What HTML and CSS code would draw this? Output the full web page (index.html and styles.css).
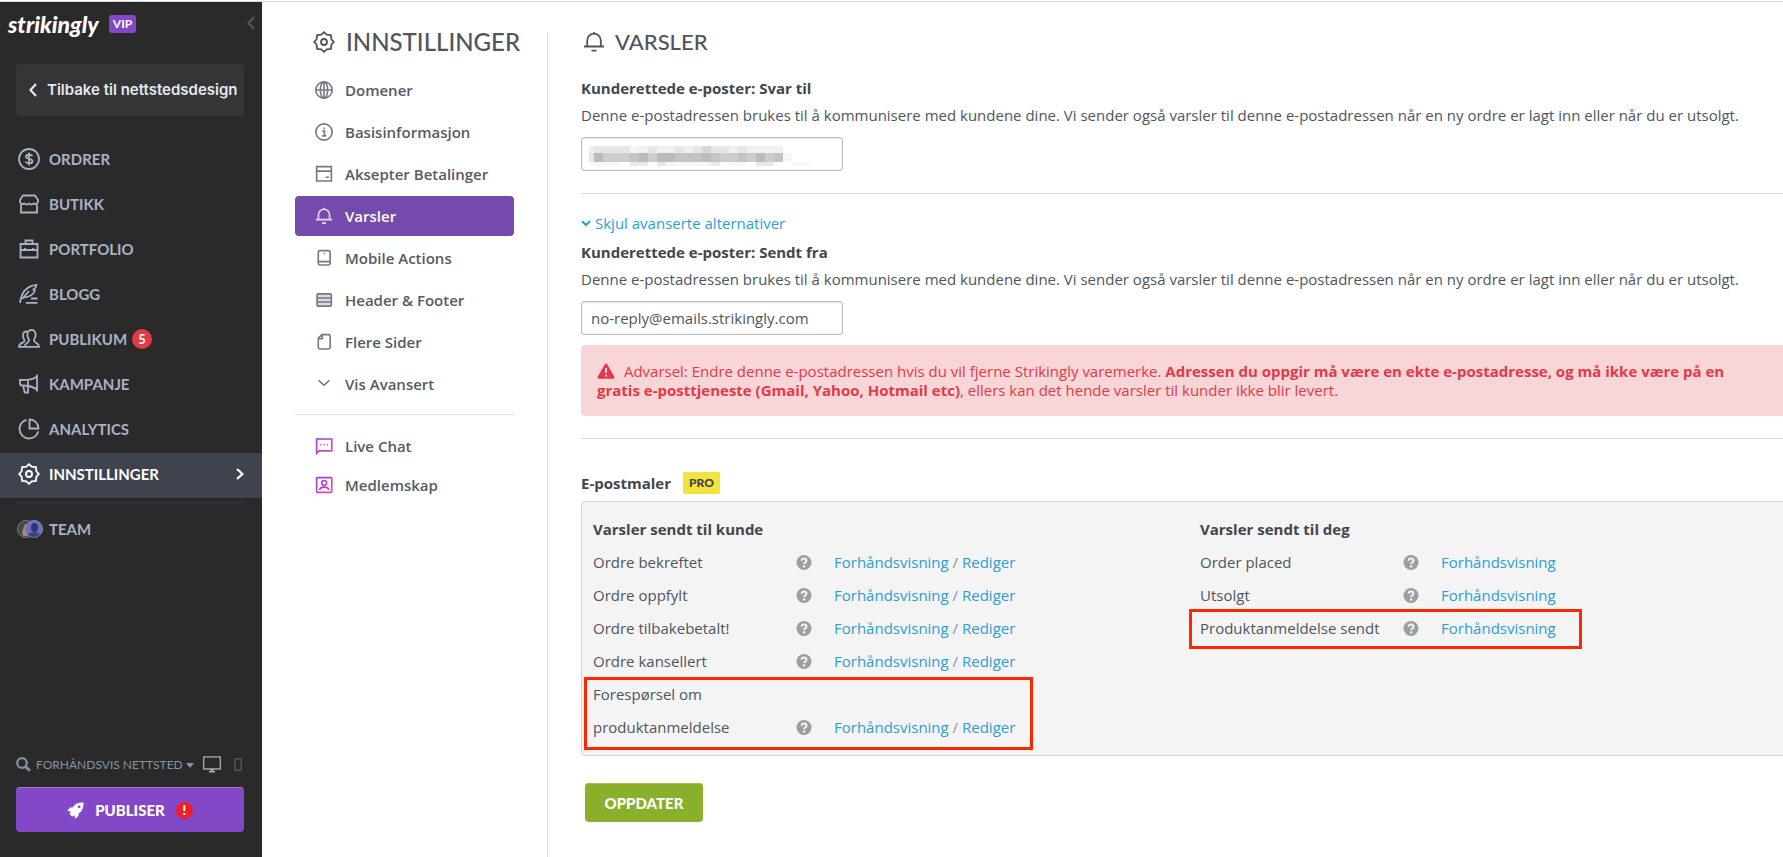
FILE: index.html
```html
<!doctype html>
<html lang="no">
<head>
<meta charset="utf-8">
<title>Varsler - Innstillinger</title>
<link rel="stylesheet" href="styles.css">
</head>
<body>
<svg width="0" height="0" class="defs">
	<defs>
	<linearGradient id="pink" x1="0" y1="0" x2="1" y2="1">
		<stop offset="0" stop-color="#9a3bdc"/>
		<stop offset="1" stop-color="#f04a9b"/>
	</linearGradient>
	<symbol id="gear" viewBox="0 0 22 22">
		<path d="M11 1.2L13.7 3.6L17.9 4.1L18.4 8.3L20.8 11L18.4 13.7L17.9 17.9L13.7 18.4L11 20.8L8.3 18.4L4.1 17.9L3.6 13.7L1.2 11L3.6 8.3L4.1 4.1L8.3 3.6Z"/>
		<circle cx="11" cy="11" r="3"/>
	</symbol>
	<symbol id="bell" viewBox="0 0 22 22">
		<path d="M1 15.5H21M4.2 15.5V9.5A6.8 6.8 0 0 1 17.8 9.5V15.5M11 1V3M8.500 19.700H13.500"/>
	</symbol>
	<symbol id="help" viewBox="0 0 16 16">
		<circle cx="8" cy="8" r="7.500" fill="#9a9fa2"/>
		<path d="M5.600 6.200C5.700 3.400 10.500 3.400 10.500 6.200C10.500 7.900 8.100 7.800 8.100 9.600" fill="none" stroke="#f4f4f4" stroke-width="2"/>
		<rect x="7" y="10.800" width="2.200" height="2.200" fill="#f4f4f4"/>
	</symbol>
	</defs>
</svg>
<div id="app">
<aside id="sidebar">
	<div class="brand">
		<span class="logo">strikingly</span>
		<span class="vip">VIP</span>
		<button type="button" class="collapse" aria-label="Skjul meny">
			<svg width="8" height="14" viewBox="0 0 8 14"><path d="M7 1L1.500 7L7 13"/></svg>
		</button>
	</div>
	<a href="#" class="back">
		<svg width="8" height="14" viewBox="0 0 8 14"><path d="M7 1L1.500 7L7 13"/></svg>
		Tilbake til nettstedsdesign
	</a>
	<nav class="mainNav">
		<a href="#"><svg class="icon" viewBox="0 0 22 22"><circle cx="11" cy="11" r="10"/><path d="M14.500 8.200C13.500 6.200 8 6.200 8 8.700C8 11.500 14.500 10.200 14.500 13.200C14.500 16 8.500 15.800 7.500 13.500M11 4.500V17.500"/></svg>ORDRER</a>
		<a href="#"><svg class="icon" viewBox="0 0 22 22"><path d="M5 2.500H17L20 7V9A3 3 0 0 1 15.500 10.500A3 3 0 0 1 11 10.500A3 3 0 0 1 6.500 10.500A3 3 0 0 1 2 9V7ZM3 11.500V19.500H19V11.500"/></svg>BUTIKK</a>
		<a href="#"><svg class="icon" viewBox="0 0 22 22"><path d="M2.500 6H19.500V19.500H2.500ZM7.500 6V2.500H14.500V6M2.500 12H19.500M7 10V13M15 10V13"/></svg>PORTFOLIO</a>
		<a href="#"><svg class="icon" viewBox="0 0 22 22"><path d="M2 20C3 11 7 3 18.500 1.800C18 5 16.500 6 15.500 6.500L17 7.500C15 12 12 14.500 5 14.500M4 16L11 8M13 15.500H19.500M8 19.800H19.500"/></svg>BLOGG</a>
		<a href="#"><svg class="icon" viewBox="0 0 22 22"><path d="M13.500 2C17 2 18 5 17.500 8C17.200 10 16 11 16 12.500C16 15 21 14.500 21 18.800H6.500C6.500 15 11 15 11 12.500C11 11 9.700 10 9.500 8C9 5 10 2 13.500 2ZM10 3.800C6 2.500 4.500 5.500 5 8.500C5.200 10.500 6.500 11 6.500 13C6.500 15 1 14.500 1 18.800H6.500"/></svg>PUBLIKUM<span class="count">5</span></a>
		<a href="#"><svg class="icon" viewBox="0 0 22 22"><path d="M19 1.500V18.500M19 3.500C15 6.500 12 7 2 7V10C2 12 3 12.500 4 12.500C12 12.500 15 13.500 19 16.500M10 7V12.500M5 12.500L6.800 19.500H10V12.500"/></svg>KAMPANJE</a>
		<a href="#"><svg class="icon" viewBox="0 0 22 22"><path d="M8.500 1.800A9.500 9.500 0 1 0 20.200 13.500M11.500 1.500V10.500H20.500A9 9 0 0 0 11.500 1.500Z"/></svg>ANALYTICS</a>
		<a href="#" class="current"><svg class="icon"><use href="#gear"/></svg>INNSTILLINGER
			<svg class="arrow" width="8" height="12" viewBox="0 0 8 12"><path d="M1 1L6.500 6L1 11"/></svg></a>
	</nav>
	<a href="#" class="team">
		<svg width="26" height="20" viewBox="0 0 26 20">
			<circle cx="9" cy="10" r="8.500" fill="#4b4642" stroke="#777b80"/>
			<path d="M8 5C12 4 12 10 10 12L11 17H6L5 13Z" fill="#a08a7c"/>
			<circle cx="17" cy="10" r="8.500" fill="#6d70b8" stroke="#8585a8"/>
			<ellipse cx="17.500" cy="8.500" rx="3.500" ry="4.500" fill="#2b3770"/>
			<path d="M11 16C13 12 22 12 23 16L17 18.500Z" fill="#3a437f"/>
		</svg>TEAM</a>
	<div class="sideFooter">
		<div class="preview">
			<svg width="15" height="15" viewBox="0 0 15 15"><circle cx="6" cy="6" r="4.800" fill="none" stroke="#8592a6" stroke-width="2.200"/><path d="M9.500 9.500L13.800 13.800" stroke="#8592a6" stroke-width="2.800"/></svg>
			<button type="button" class="previewBtn">FORHÅNDSVIS NETTSTED <span class="caret"></span></button>
			<svg width="18" height="17" viewBox="0 0 18 17"><path d="M.7.800H17.300V13H.700Z" fill="none" stroke="#a9a9a9" stroke-width="1.300"/><path d="M7.500 13H10.500V15H12V16.500H6V15H7.500Z" fill="#a9a9a9"/></svg>
			<svg class="phone" width="8" height="13" viewBox="0 0 8 13"><rect x=".8" y=".8" width="6.400" height="11.400" rx="1" fill="none" stroke="#4d5563" stroke-width="1.500"/></svg>
		</div>
		<button type="button" class="publish">
			<svg width="17" height="17" viewBox="0 0 17 17"><path d="M16.500 .5C11 .2 7.500 2 5.500 5.500H3L.3 9L3.800 9.500L2.500 12L5 14.500L7.500 13.200L8 16.700L11.500 14V11.500C15 9.500 16.800 6 16.500.5Z" fill="#fff"/><circle cx="12.200" cy="4.800" r="1.400" fill="#8348c8"/></svg>
			PUBLISER
			<span class="alertDot">!</span>
		</button>
	</div>
</aside>
<section id="settings">
	<h1><svg class="icon"><use href="#gear"/></svg>INNSTILLINGER</h1>
	<nav class="subNav">
		<a href="#"><svg class="icon" viewBox="0 0 22 22"><circle cx="11" cy="11" r="10"/><ellipse cx="11" cy="11" rx="4.500" ry="10"/><path d="M1 11H21M11 1V21"/></svg>Domener</a>
		<a href="#"><svg class="icon" viewBox="0 0 22 22"><circle cx="11" cy="11" r="10"/><path d="M9 10H11.500V15.500M8.800 15.800H13.800M10.200 6.500H12"/></svg>Basisinformasjon</a>
		<a href="#"><svg class="icon" viewBox="0 0 22 22"><path d="M2 2H20V19.500H2ZM2 7.500H20M13 15H17"/></svg>Aksepter Betalinger</a>
		<a href="#" class="selected"><svg class="icon"><use href="#bell"/></svg>Varsler</a>
		<a href="#"><svg class="icon" viewBox="0 0 22 22"><rect x="4" y="2" width="14.500" height="17.500" rx="2"/><path d="M4 15.500H18.500M10.500 5.500H12"/></svg>Mobile Actions</a>
		<a href="#"><svg class="icon" viewBox="0 0 22 22"><rect x="2.500" y="3.500" width="17.500" height="15" rx="1.500" fill="#d8dade"/><path d="M2.500 8.500H20M2.500 13.500H20"/></svg>Header &amp; Footer</a>
		<a href="#"><svg class="icon" viewBox="0 0 22 22"><path d="M8.500 2H16.500A2 2 0 0 1 18.500 4V17.500A2 2 0 0 1 16.500 19.500H6A2 2 0 0 1 4 17.500V6.500ZM9 2V7H4"/></svg>Flere Sider</a>
		<a href="#"><svg class="icon" viewBox="0 0 22 22"><path d="M4.500 6.500L11 12.500L17.500 6.500"/></svg>Vis Avansert</a>
	</nav>
	<nav class="subNav extra">
		<a href="#"><svg class="icon pink" viewBox="0 0 22 22"><path d="M2 20V2.500H20.500V17H5ZM6.500 9.500H8M10.500 9.500H12M14.500 9.500H16"/></svg>Live Chat</a>
		<a href="#"><svg class="icon pink" viewBox="0 0 22 22"><rect x="2" y="2" width="18.500" height="18" rx="1"/><circle cx="11.200" cy="8.500" r="3"/><path d="M5.500 17C7 12.500 15.500 12.500 17 17"/></svg>Medlemskap</a>
	</nav>
</section>
<main id="content">
<div class="inner">
	<h2><svg class="icon"><use href="#bell"/></svg>VARSLER</h2>
	<form>
	<label class="fieldTitle" for="replyTo">Kunderettede e-poster: Svar til</label>
	<p>Denne e-postadressen brukes til å kommunisere med kundene dine. Vi sender også varsler til denne e-postadressen når en ny ordre er lagt inn eller når du er utsolgt.</p>
	<div class="field">
		<input type="text" id="replyTo">
		<svg class="masked" width="221" height="20" viewBox="0 0 221 20" shape-rendering="crispEdges">
			<path fill="#eff0f0" d="M0 0H5V7H0ZM50 0H59V7H50ZM68 0H104V7H68ZM131 0H194V7H131Z"/>
			<path fill="#e4e6e7" d="M5 0H41V7H5ZM59 0H68V7H59ZM86 0H95V7H86ZM104 0H140V7H104ZM149 0H158V7H149Z"/>
			<path fill="#f6f6f6" d="M41 0H50V7H41Z"/>
			<path fill="#d5d7d9" d="M113 0H122V7H113Z"/>
			<path fill="#e6e7e9" d="M0 7H5V16H0Z"/>
			<path fill="#cccdd0" d="M14 7H194V16H14Z"/>
			<path fill="#b8bbc0" d="M5 7H14V16H5ZM50 7H59V16H50ZM68 7H86V16H68ZM113 7H122V16H113ZM167 7H176V16H167Z"/>
			<path fill="#c2c5c8" d="M41 7H50V16H41ZM86 7H113V16H86ZM122 7H131V16H122ZM149 7H158V16H149ZM185 7H194V16H185Z"/>
			<path fill="#f6f7f8" d="M0 16H14V20H0ZM14 16H32V20H14ZM77 16H122V20H77ZM140 16H158V20H140ZM194 7H203V16H194ZM203 16H221V20H203Z"/>
			<path fill="#e6e8ea" d="M41 16H59V20H41ZM68 16H77V20H68ZM122 16H131V20H122ZM167 16H185V20H167Z"/>
		</svg>
	</div>
	<hr>
	<a href="#" class="toggle"><svg width="10" height="7" viewBox="0 0 10 7"><path d="M1 1.200L5 5L9 1.200" fill="none" stroke="#2b9fd3" stroke-width="2.200"/></svg>Skjul avanserte alternativer</a>
	<label class="fieldTitle" for="sentFrom">Kunderettede e-poster: Sendt fra</label>
	<p>Denne e-postadressen brukes til å kommunisere med kundene dine. Vi sender også varsler til denne e-postadressen når en ny ordre er lagt inn eller når du er utsolgt.</p>
	<div class="field">
		<input type="text" id="sentFrom" value="no-reply@emails.strikingly.com">
	</div>
	<div class="warning">
		<svg width="18" height="16" viewBox="0 0 18 16"><path d="M9 0.500C9.600 .5 10 .9 10.300 1.500L17.300 13.800C17.900 15 17.400 15.700 16.300 15.700H1.700C.6 15.700 .1 15 .7 13.800L7.700 1.500C8 .9 8.400 .5 9 .5Z" fill="#e23a48"/><path d="M9 5V10M9 11.500V13.500" stroke="#f8d5d7" stroke-width="2"/></svg>
		Advarsel: Endre denne e-postadressen hvis du vil fjerne Strikingly varemerke. <b>Adressen du oppgir må være en ekte e-postadresse, og må ikke være på en gratis e-posttjeneste (Gmail, Yahoo, Hotmail etc)</b>, ellers kan det hende varsler til kunder ikke blir levert.
	</div>
	<hr>
	<h3>E-postmaler <span class="pro">PRO</span></h3>
	<div class="templates">
		<div>
			<h4>Varsler sendt til kunde</h4>
			<ul>
				<li><span>Ordre bekreftet</span><svg class="help"><use href="#help"/></svg><span class="links"><a href="#">Forhåndsvisning</a> / <a href="#">Rediger</a></span></li>
				<li><span>Ordre oppfylt</span><svg class="help"><use href="#help"/></svg><span class="links"><a href="#">Forhåndsvisning</a> / <a href="#">Rediger</a></span></li>
				<li><span>Ordre tilbakebetalt!</span><svg class="help"><use href="#help"/></svg><span class="links"><a href="#">Forhåndsvisning</a> / <a href="#">Rediger</a></span></li>
				<li><span>Ordre kansellert</span><svg class="help"><use href="#help"/></svg><span class="links"><a href="#">Forhåndsvisning</a> / <a href="#">Rediger</a></span></li>
				<li class="marked wide"><span>Forespørsel om produktanmeldelse</span><svg class="help"><use href="#help"/></svg><span class="links"><a href="#">Forhåndsvisning</a> / <a href="#">Rediger</a></span></li>
			</ul>
		</div>
		<div>
			<h4>Varsler sendt til deg</h4>
			<ul>
				<li><span>Order placed</span><svg class="help"><use href="#help"/></svg><span class="links"><a href="#">Forhåndsvisning</a></span></li>
				<li><span>Utsolgt</span><svg class="help"><use href="#help"/></svg><span class="links"><a href="#">Forhåndsvisning</a></span></li>
				<li class="marked"><span>Produktanmeldelse sendt</span><svg class="help"><use href="#help"/></svg><span class="links"><a href="#">Forhåndsvisning</a></span></li>
			</ul>
		</div>
	</div>
	<button type="button" class="update">OPPDATER</button>
	</form>
</div>
</main>
</div>
</body>
</html>
```
FILE: styles.css
```css
*{
	box-sizing: border-box;
}
body{
	margin: 0;
	padding-top: 1px;
	background-color: #fff;
	color: #50555c;
	font-family: "Open Sans", sans-serif;
	font-size: 15px;
	line-height: 24px;
	overflow-x: hidden;
}
a{
	color: #2b9fd3;
	text-decoration: none;
}
button{
	border: 0;
	padding: 0;
	background: none;
	font-family: Lato, sans-serif;
	cursor: pointer;
}
.defs{
	position: absolute;
}
#app{
	display: flex;
	min-height: calc(100vh - 1px);
	border-top: 1px solid #d9d9d9;
}
.icon{
	width: 22px;
	height: 22px;
	flex: none;
	fill: none;
	stroke: currentColor;
	stroke-width: 1.8;
}

/* dark sidebar */
#sidebar{
	width: 262px;
	flex: none;
	display: flex;
	flex-direction: column;
	background-color: #2a2a2a;
	color: #a8b2c6;
	font-family: Lato, sans-serif;
	font-weight: bold;
}
.brand{
	display: flex;
	align-items: center;
	height: 44px;
	padding: 0 7px 0 8px;
}
.logo{
	color: #fff;
	font-size: 23px;
	font-weight: 900;
	font-style: italic;
}
.vip{
	margin-left: 10px;
	padding: 0 4px;
	border-radius: 3px;
	background-color: #8348c8;
	color: #fff;
	font-size: 12px;
	line-height: 18px;
}
.collapse{
	margin-left: auto;
	color: #4d5766;
}
.collapse svg, .back svg, .arrow{
	fill: none;
	stroke: currentColor;
	stroke-width: 2.2;
}
.back{
	display: flex;
	align-items: center;
	gap: 10px;
	height: 52px;
	margin: 18px 18px 0 16px;
	padding-left: 13px;
	border-radius: 4px;
	background-color: #343537;
	color: #e4e8ef;
	font-family: Inter, sans-serif;
	font-size: 15px;
	font-weight: 600;
	white-space: nowrap;
}
.mainNav{
	margin-top: 22px;
}
.mainNav a, .team{
	display: flex;
	align-items: center;
	gap: 9px;
	height: 45px;
	padding: 0 18px 4px;
	color: #a8b2c6;
	font-size: 15px;
}
.mainNav .current{
	background-color: #3f434e;
	color: #fff;
}
.arrow{
	margin-left: auto;
}
.count{
	width: 20px;
	margin-left: -4px;
	border-radius: 10px;
	background-color: #e23a48;
	color: #fff;
	font-size: 13px;
	line-height: 20px;
	text-align: center;
}
.team{
	gap: 6px;
	margin: 4px 18px 0 16px;
	padding: 8px 0 0 1px;
	border-top: 1px solid #383838;
}
.sideFooter{
	margin-top: auto;
	padding: 0 18px 25px 16px;
}
.preview{
	display: flex;
	align-items: center;
	height: 24px;
	margin-bottom: 11px;
}
.previewBtn{
	margin: 0 9px 0 5px;
	color: #8592a6;
	font-size: 12px;
	white-space: nowrap;
}
.caret{
	display: inline-block;
	border: 4px solid transparent;
	border-top: 5px solid #8592a6;
	border-bottom: 0;
	vertical-align: middle;
}
.phone{
	margin-left: 13px;
}
.publish{
	display: flex;
	align-items: center;
	justify-content: center;
	gap: 11px;
	width: 100%;
	height: 45px;
	border-top: 1px solid #a678dc;
	border-radius: 4px;
	background-color: #8348c8;
	color: #fff;
	font-size: 15px;
	font-weight: 900;
}
.alertDot{
	width: 17px;
	border-radius: 9px;
	background-color: #ee1f27;
	font-size: 13px;
	line-height: 17px;
}

/* settings menu */
#settings{
	width: 286px;
	flex: none;
	margin-top: 30px;
	padding: 0 33px;
	border-right: 1px solid #ddd;
}
h1, h2{
	display: flex;
	align-items: center;
	margin: 0;
	font-family: Lato, sans-serif;
	font-weight: 500;
	line-height: 32px;
}
h1{
	gap: 11px;
	margin: -6px 0 12px;
	padding-left: 18px;
	font-size: 24px;
}
.subNav a{
	display: flex;
	align-items: center;
	gap: 12px;
	height: 40px;
	margin-bottom: 2px;
	padding-left: 20px;
	border-radius: 4px;
	color: #555b63;
	font-weight: 600;
}
.subNav .icon{
	width: 18px;
	height: 18px;
	stroke: #747982;
	stroke-width: 2;
}
.subNav .selected{
	background-color: #764aad;
	color: #fff;
}
.subNav .selected .icon{
	stroke: #e4d9f2;
}
.extra{
	margin-top: 10px;
	padding-top: 11px;
	border-top: 1px solid #e2e2e2;
}
.extra a{
	height: 39px;
	margin: 0;
}
.subNav .pink{
	stroke: url(#pink);
}

/* page content */
#content{
	flex: 1;
	min-width: 0;
	overflow: hidden;
	padding: 24px 0 32px 33px;
}
.inner{
	min-width: 1238px;
}
h2{
	gap: 10px;
	padding-left: 2px;
	font-size: 22px;
}
.fieldTitle, h3, h4{
	display: block;
	margin: 0;
	color: #42464c;
	font-size: 15px;
	font-weight: bold;
}
h2 + form{
	margin-top: 18px;
}
p{
	margin: 3px 0 10px;
}
.field{
	position: relative;
	width: 262px;
}
input{
	display: block;
	width: 100%;
	height: 34px;
	padding: 0 9px;
	border: 1px solid #b9bbbe;
	border-radius: 3px;
	box-shadow: inset 0 1px 2px rgba(0,0,0,.1);
	color: #50555c;
	font-family: "Open Sans", sans-serif;
	font-size: 15px;
}
.masked{
	position: absolute;
	left: 8px;
	top: 9px;
}
hr{
	height: 1px;
	margin: 22px 0 17px;
	border: 0;
	background-color: #ddd;
}
.toggle{
	display: flex;
	align-items: center;
	gap: 4px;
	margin-bottom: 5px;
}
.warning{
	margin-top: 10px;
	padding: 17px 60px 16px 16px;
	border-radius: 4px;
	background-color: #f8d5d7;
	color: #e23a48;
	line-height: 19px;
}
.warning svg{
	margin-right: 5px;
	vertical-align: -2px;
}
.warning + hr{
	margin-bottom: 32px;
}
h3{
	display: flex;
	align-items: center;
	gap: 12px;
}
.pro{
	padding: 0 6px;
	border-radius: 2px;
	background-color: #f5e23a;
	font-family: Lato, sans-serif;
	font-size: 12px;
	font-weight: 900;
	line-height: 22px;
}
.templates{
	display: grid;
	grid-template-columns: 1fr 1fr;
	margin-top: 6px;
	padding: 11px;
	border: 1px solid #d6d6d6;
	border-radius: 4px;
	background-color: #f4f4f4;
	line-height: 33px;
}
ul{
	margin: 0;
	padding: 0;
	list-style: none;
}
li{
	display: grid;
	grid-template-columns: 187px 16px 1fr;
	column-gap: 16px;
	align-items: end;
	position: relative;
	width: 431px;
}
.links{
	padding-left: 6px;
	color: #8d9196;
}
.help{
	width: 16px;
	height: 33px;
}
.marked::after{
	content: "";
	position: absolute;
	top: -3px;
	right: 49px;
	bottom: -4px;
	left: -11px;
	border: 3px solid #ff2600;
	pointer-events: none;
}
.wide::after{
	top: -1px;
	right: -9px;
	bottom: -6px;
	left: -9px;
}
.update{
	width: 118px;
	height: 39px;
	margin: 27px 0 0 4px;
	border-radius: 4px;
	background-color: #8ab02b;
	box-shadow: inset 0 1px 0 #a3c255;
	color: #fff;
	font-size: 15px;
	font-weight: 900;
}
```
